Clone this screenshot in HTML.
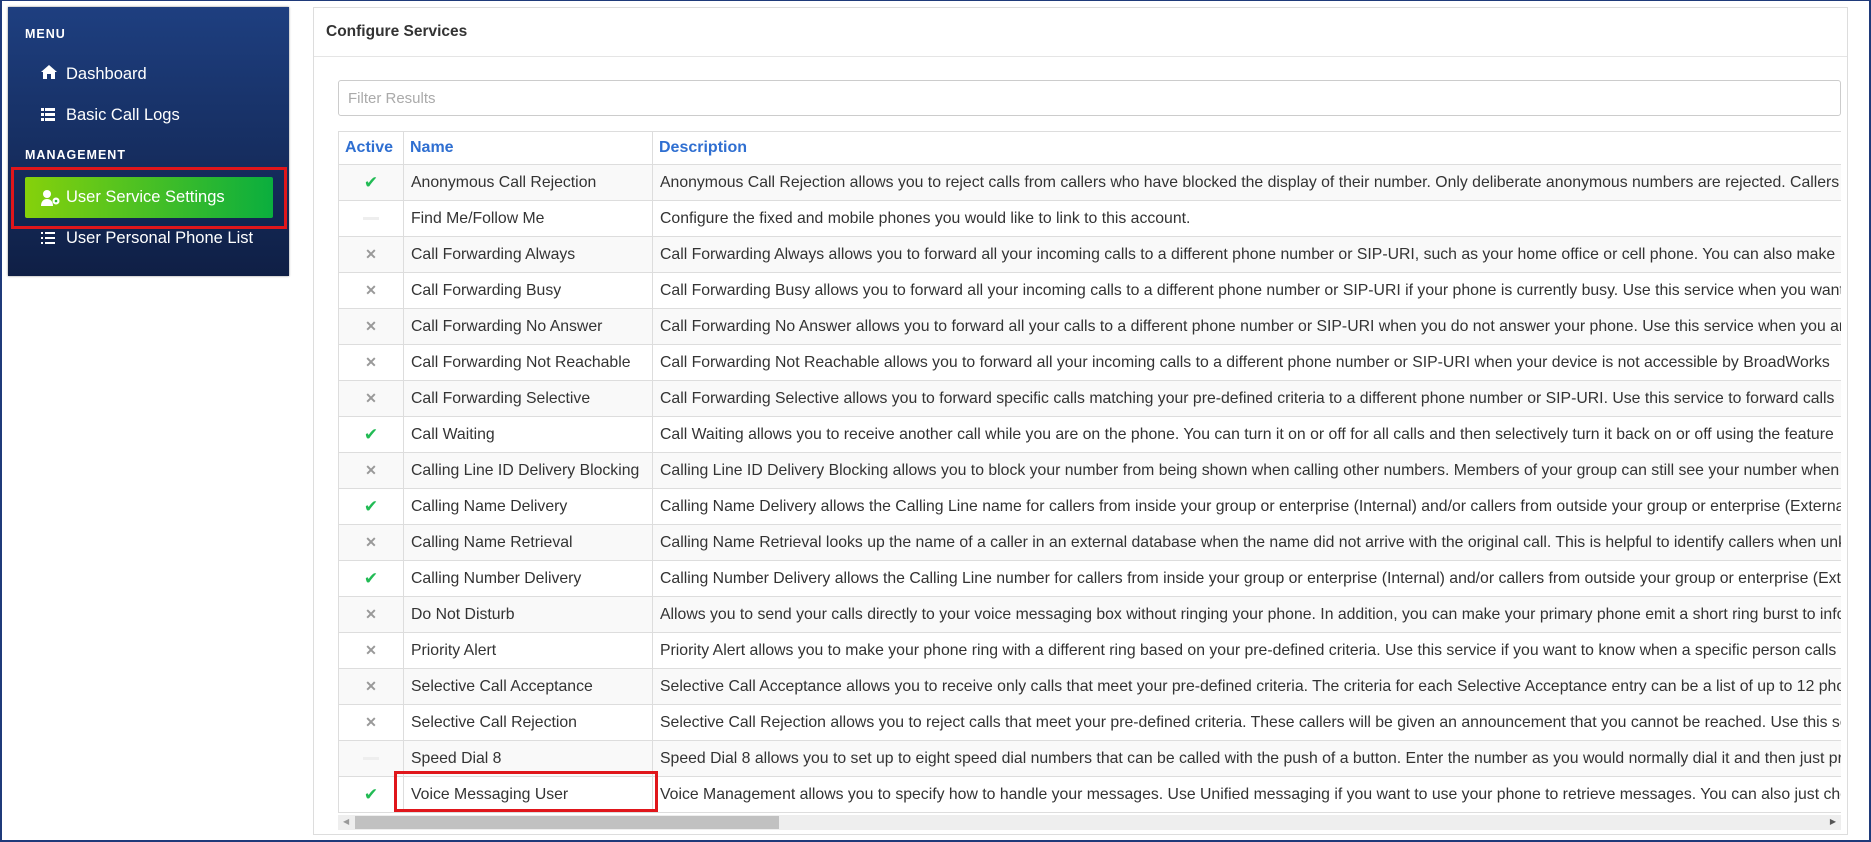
<!DOCTYPE html>
<html><head><meta charset="utf-8"><style>
*{box-sizing:border-box;margin:0;padding:0}
html,body{width:1871px;height:842px;overflow:hidden;background:#fff;font-family:"Liberation Sans",Arial,sans-serif}
.frame{position:absolute;left:0;top:0;width:1871px;height:842px;border:2px solid #1f3a7a;border-top:1px solid #1f3a7a}
.side{position:absolute;left:8px;top:7px;width:281px;height:269px;background:linear-gradient(#1e3f80,#0f1f45);box-shadow:0 0 2px #888}
.lbl{position:absolute;left:17px;color:#fff;font-size:12.5px;font-weight:bold;letter-spacing:1px}
.item{position:absolute;left:58px;color:#fff;font-size:16.5px}
.ico{position:absolute;left:33px}
.redbox{position:absolute;border:3px solid #e0161b}
.btn{position:absolute;left:17px;top:170px;width:248px;height:41px;background:linear-gradient(90deg,#86d10b,#0aae3e);border-radius:2px}
.main{position:absolute;left:313px;top:7px;width:1535px;height:828px;border:1px solid #ddd;background:#fff}
.hdr{height:49px;border-bottom:1px solid #e5e5e5;padding:15px 12px;font-weight:bold;font-size:15.5px;color:#333}
.filter{position:absolute;left:24px;top:72px;width:1503px;height:36px;border:1px solid #ccc;border-radius:3px;color:#aaa;font-size:15px;padding:9px 9px}
.tw{position:absolute;left:24px;top:123px;width:1503px;height:700px;overflow:hidden}
table{border-collapse:collapse;font-size:15.8px;color:#333;table-layout:fixed;width:2600px}
td,th{border:1px solid #ddd;white-space:nowrap;overflow:hidden;padding:0 7px;height:36px;text-align:left}
th{height:33px;color:#2f6fd1;font-weight:bold;padding:0 6px;font-size:16px}
tr:nth-child(even) td{background:#f9f9f9}
td.a{text-align:center;padding:0}
.ck{color:#22bb55;font-size:17px}
.x{color:#999;font-size:14px;font-weight:bold}
.dash{display:inline-block;width:16px;height:3px;background:#eee;vertical-align:middle}
.sb{position:absolute;left:24px;top:807px;width:1503px;height:15px;background:#eee}
.th{position:absolute;left:17px;top:1px;width:424px;height:13px;background:#c1c1c1}
</style></head><body>
<div class="frame"></div>
<div class="side">
<div class="lbl" style="top:20px">MENU</div>
<svg class="ico" style="top:58px" width="16" height="14" viewBox="0 0 16 14"><path d="M8 0L0 7h2v7h4V9h4v5h4V7h2z" fill="#fff"/></svg>
<div class="item" style="top:58px">Dashboard</div>
<svg class="ico" style="top:101px" width="14" height="14" viewBox="0 0 14 14" fill="#fff"><rect x="0" y="0" width="3" height="3"/><rect x="4" y="0" width="10" height="3"/><rect x="0" y="5" width="3" height="3"/><rect x="4" y="5" width="10" height="3"/><rect x="0" y="10" width="3" height="3"/><rect x="4" y="10" width="10" height="3"/></svg>
<div class="item" style="top:99px">Basic Call Logs</div>
<div class="lbl" style="top:141px">MANAGEMENT</div>
<div class="btn"></div>
<svg class="ico" style="top:183px" width="20" height="16" viewBox="0 0 20 16" fill="#fff"><circle cx="6" cy="4" r="4"/><path d="M0 16c0-5 3-7 6-7s6 2 6 7z"/><circle cx="15" cy="11" r="3.5"/><circle cx="15" cy="11" r="1.3" fill="#2cb52c"/></svg>
<div class="item" style="top:181px">User Service Settings</div>
<svg class="ico" style="top:225px" width="14" height="13" viewBox="0 0 14 13" fill="#fff"><rect x="0" y="0" width="2" height="2"/><rect x="4" y="0" width="10" height="2"/><rect x="0" y="5" width="2" height="2"/><rect x="4" y="5" width="10" height="2"/><rect x="0" y="10" width="2" height="2"/><rect x="4" y="10" width="10" height="2"/></svg>
<div class="item" style="top:222px">User Personal Phone List</div>
</div>
<div class="redbox" style="left:11px;top:167px;width:276px;height:62px"></div>
<div class="main">
<div class="hdr">Configure Services</div>
<div class="filter">Filter Results</div>
<div class="tw"><table>
<colgroup><col style="width:65px"><col style="width:249px"><col style="width:2286px"></colgroup>
<tr><th>Active</th><th>Name</th><th>Description</th></tr>
<tr><td class="a"><span class="ck">✔</span></td><td>Anonymous Call Rejection</td><td>Anonymous Call Rejection allows you to reject calls from callers who have blocked the display of their number. Only deliberate anonymous numbers are rejected. Callers</td></tr>
<tr><td class="a"><span class="dash"></span></td><td>Find Me/Follow Me</td><td>Configure the fixed and mobile phones you would like to link to this account.</td></tr>
<tr><td class="a"><span class="x">✕</span></td><td>Call Forwarding Always</td><td>Call Forwarding Always allows you to forward all your incoming calls to a different phone number or SIP-URI, such as your home office or cell phone. You can also make</td></tr>
<tr><td class="a"><span class="x">✕</span></td><td>Call Forwarding Busy</td><td>Call Forwarding Busy allows you to forward all your incoming calls to a different phone number or SIP-URI if your phone is currently busy. Use this service when you want</td></tr>
<tr><td class="a"><span class="x">✕</span></td><td>Call Forwarding No Answer</td><td>Call Forwarding No Answer allows you to forward all your calls to a different phone number or SIP-URI when you do not answer your phone. Use this service when you are</td></tr>
<tr><td class="a"><span class="x">✕</span></td><td>Call Forwarding Not Reachable</td><td>Call Forwarding Not Reachable allows you to forward all your incoming calls to a different phone number or SIP-URI when your device is not accessible by BroadWorks</td></tr>
<tr><td class="a"><span class="x">✕</span></td><td>Call Forwarding Selective</td><td>Call Forwarding Selective allows you to forward specific calls matching your pre-defined criteria to a different phone number or SIP-URI. Use this service to forward calls</td></tr>
<tr><td class="a"><span class="ck">✔</span></td><td>Call Waiting</td><td>Call Waiting allows you to receive another call while you are on the phone. You can turn it on or off for all calls and then selectively turn it back on or off using the feature</td></tr>
<tr><td class="a"><span class="x">✕</span></td><td>Calling Line ID Delivery Blocking</td><td>Calling Line ID Delivery Blocking allows you to block your number from being shown when calling other numbers. Members of your group can still see your number when</td></tr>
<tr><td class="a"><span class="ck">✔</span></td><td>Calling Name Delivery</td><td>Calling Name Delivery allows the Calling Line name for callers from inside your group or enterprise (Internal) and/or callers from outside your group or enterprise (External)</td></tr>
<tr><td class="a"><span class="x">✕</span></td><td>Calling Name Retrieval</td><td>Calling Name Retrieval looks up the name of a caller in an external database when the name did not arrive with the original call. This is helpful to identify callers when unknown</td></tr>
<tr><td class="a"><span class="ck">✔</span></td><td>Calling Number Delivery</td><td>Calling Number Delivery allows the Calling Line number for callers from inside your group or enterprise (Internal) and/or callers from outside your group or enterprise (External)</td></tr>
<tr><td class="a"><span class="x">✕</span></td><td>Do Not Disturb</td><td>Allows you to send your calls directly to your voice messaging box without ringing your phone. In addition, you can make your primary phone emit a short ring burst to inform</td></tr>
<tr><td class="a"><span class="x">✕</span></td><td>Priority Alert</td><td>Priority Alert allows you to make your phone ring with a different ring based on your pre-defined criteria. Use this service if you want to know when a specific person calls</td></tr>
<tr><td class="a"><span class="x">✕</span></td><td>Selective Call Acceptance</td><td>Selective Call Acceptance allows you to receive only calls that meet your pre-defined criteria. The criteria for each Selective Acceptance entry can be a list of up to 12 phone</td></tr>
<tr><td class="a"><span class="x">✕</span></td><td>Selective Call Rejection</td><td>Selective Call Rejection allows you to reject calls that meet your pre-defined criteria. These callers will be given an announcement that you cannot be reached. Use this service</td></tr>
<tr><td class="a"><span class="dash"></span></td><td>Speed Dial 8</td><td>Speed Dial 8 allows you to set up to eight speed dial numbers that can be called with the push of a button. Enter the number as you would normally dial it and then just press</td></tr>
<tr><td class="a"><span class="ck">✔</span></td><td>Voice Messaging User</td><td>Voice Management allows you to specify how to handle your messages. Use Unified messaging if you want to use your phone to retrieve messages. You can also just choose</td></tr>
</table></div>
<div class="sb"><div class="th"></div><span style="position:absolute;left:5px;top:2px;font-size:8px;color:#999">◀</span><span style="position:absolute;right:5px;top:2px;font-size:8px;color:#555">▶</span></div>
</div>
<div class="redbox" style="left:394px;top:771px;width:264px;height:41px"></div>
</body></html>
